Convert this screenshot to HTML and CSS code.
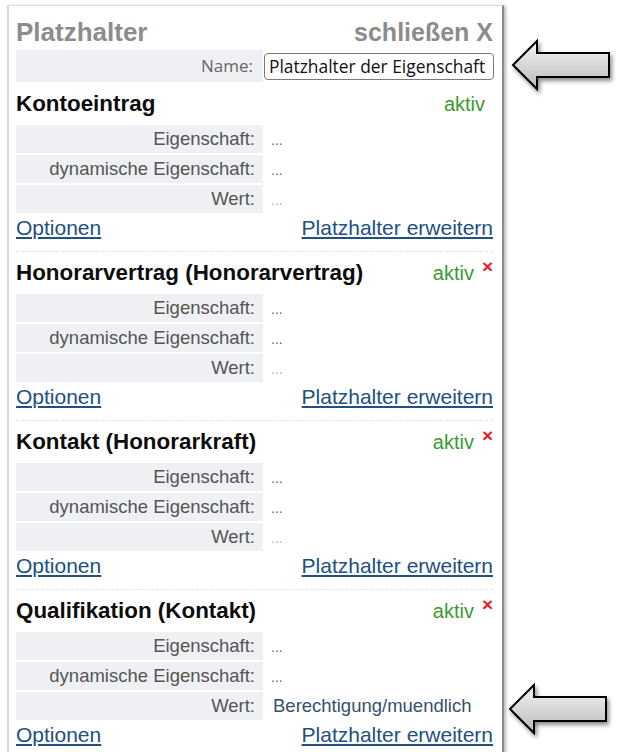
FILE: index.html
```html
<!DOCTYPE html>
<html lang="de">
<head>
<meta charset="utf-8">
<title>Platzhalter</title>
<link rel="stylesheet" href="styles.css">
</head>
<body>
<div class="panel">
  <div class="title-row">
    <span class="title">Platzhalter</span>
    <span class="close">schließen X</span>
  </div>
  <div class="name-row">
    <div class="name-label">Name:</div>
    <div class="name-field"><input class="name-input" type="text" value="Platzhalter der Eigenschaft"></div>
  </div>

  <section class="entry">
    <div class="entry-head">
      <span class="entry-title">Kontoeintrag</span>
      <span class="status status-solo">aktiv</span>
    </div>
    <div class="props">
      <div class="prop-label">Eigenschaft:</div><div class="prop-value">...</div>
      <div class="prop-label">dynamische Eigenschaft:</div><div class="prop-value">...</div>
      <div class="prop-label">Wert:</div><div class="prop-value prop-empty">...</div>
    </div>
    <div class="entry-links"><a href="#">Optionen</a><a href="#">Platzhalter erweitern</a></div>
  </section>

  <section class="entry">
    <div class="entry-head">
      <span class="entry-title">Honorarvertrag (Honorarvertrag)</span>
      <span class="status">aktiv<span class="remove">×</span></span>
    </div>
    <div class="props">
      <div class="prop-label">Eigenschaft:</div><div class="prop-value">...</div>
      <div class="prop-label">dynamische Eigenschaft:</div><div class="prop-value">...</div>
      <div class="prop-label">Wert:</div><div class="prop-value prop-empty">...</div>
    </div>
    <div class="entry-links"><a href="#">Optionen</a><a href="#">Platzhalter erweitern</a></div>
  </section>

  <section class="entry">
    <div class="entry-head">
      <span class="entry-title">Kontakt (Honorarkraft)</span>
      <span class="status">aktiv<span class="remove">×</span></span>
    </div>
    <div class="props">
      <div class="prop-label">Eigenschaft:</div><div class="prop-value">...</div>
      <div class="prop-label">dynamische Eigenschaft:</div><div class="prop-value">...</div>
      <div class="prop-label">Wert:</div><div class="prop-value prop-empty">...</div>
    </div>
    <div class="entry-links"><a href="#">Optionen</a><a href="#">Platzhalter erweitern</a></div>
  </section>

  <section class="entry">
    <div class="entry-head">
      <span class="entry-title">Qualifikation (Kontakt)</span>
      <span class="status">aktiv<span class="remove">×</span></span>
    </div>
    <div class="props">
      <div class="prop-label">Eigenschaft:</div><div class="prop-value">...</div>
      <div class="prop-label">dynamische Eigenschaft:</div><div class="prop-value">...</div>
      <div class="prop-label">Wert:</div><div class="prop-value prop-filled">Berechtigung/muendlich</div>
    </div>
    <div class="entry-links"><a href="#">Optionen</a><a href="#">Platzhalter erweitern</a></div>
  </section>
</div>

<svg class="arrow arrow-top" width="112" height="64" viewBox="0 0 112 64" aria-hidden="true">
  <defs>
    <linearGradient id="ag1" x1="0" y1="0" x2="0" y2="1">
      <stop offset="0" stop-color="#f6f6f6"/>
      <stop offset="1" stop-color="#b9b9b9"/>
    </linearGradient>
  </defs>
  <path d="M8 31 L32 7 L32 19 L104 19 L104 43 L32 43 L32 55 Z" fill="url(#ag1)" stroke="#000" stroke-width="2" stroke-linejoin="miter"/>
</svg>
<svg class="arrow arrow-bottom" width="112" height="64" viewBox="0 0 112 64" aria-hidden="true">
  <defs>
    <linearGradient id="ag2" x1="0" y1="0" x2="0" y2="1">
      <stop offset="0" stop-color="#f6f6f6"/>
      <stop offset="1" stop-color="#b9b9b9"/>
    </linearGradient>
  </defs>
  <path d="M8 31 L32 7 L32 19 L104 19 L104 43 L32 43 L32 55 Z" fill="url(#ag2)" stroke="#000" stroke-width="2" stroke-linejoin="miter"/>
</svg>
</body>
</html>
```
FILE: styles.css
```css
html, body {
  margin: 0;
  padding: 0;
  overflow: hidden;
  background: #ffffff;
}

body {
  position: relative;
  width: 620px;
  height: 752px;
  font-family: "Liberation Sans", Arial, sans-serif;
}

.panel {
  box-sizing: border-box;
  width: 497px;
  margin: 5px 0 0 7px;
  padding: 11px 9px 0 7px;
  background: #ffffff;
  border-top: 1px solid #dcdcdc;
  border-left: 2px solid #d9d9d9;
  border-right: 2px solid #8a8a8a;
  box-shadow: 2px 1px 3px rgba(0, 0, 0, 0.28);
}

.title-row {
  display: flex;
  justify-content: space-between;
  align-items: baseline;
  height: 30px;
  line-height: 30px;
  margin-bottom: 3px;
  color: #8c8c8c;
  font-weight: bold;
}

.title {
  font-size: 26px;
}

.close {
  font-size: 25px;
}

.name-row {
  display: grid;
  grid-template-columns: 247px 1fr;
  height: 32px;
  margin-bottom: 1px;
}

.name-label {
  background: #eef0f3;
  text-align: right;
  padding-right: 10px;
  font-family: "Open Sans", "DejaVu Sans", sans-serif;
  font-size: 17px;
  line-height: 32px;
  color: #666666;
}

.name-field {
  display: flex;
  align-items: center;
  padding-left: 1px;
}

.name-input {
  box-sizing: border-box;
  width: 230px;
  height: 27px;
  margin: 0;
  padding: 0 0 0 4px;
  border: 1px solid #7a7a7a;
  border-radius: 4px;
  font-family: "Open Sans", "DejaVu Sans", sans-serif;
  font-size: 17.4px;
  color: #111111;
  background: #ffffff;
  outline: none;
}

.entry {
  padding: 8px 0 10px;
  border-bottom: 1px dashed #dfe4ea;
}

.entry-head {
  display: flex;
  justify-content: space-between;
  align-items: baseline;
  height: 26px;
  line-height: 26px;
  margin-bottom: 8px;
}

.entry-title {
  font-size: 22.4px;
  font-weight: bold;
  color: #0d0d0d;
}

.status {
  font-size: 20px;
  color: #3a9a32;
}

.status-solo {
  padding-right: 8px;
}

.remove {
  display: inline-block;
  vertical-align: top;
  margin-left: 8px;
  line-height: 13px;
  font-size: 19px;
  font-weight: bold;
  color: #e41f1f;
}

.props {
  display: grid;
  grid-template-columns: 247px 1fr;
  grid-auto-rows: 28px;
  row-gap: 2px;
}

.prop-label {
  background: #eef0f3;
  text-align: right;
  padding-right: 8px;
  font-size: 18.5px;
  line-height: 28px;
  color: #555555;
  white-space: nowrap;
}

.prop-value {
  padding-left: 8px;
  font-size: 14px;
  line-height: 30px;
  color: #666666;
}

.prop-empty {
  color: #b0b0b0;
}

.prop-filled {
  padding-left: 10px;
  font-size: 18.5px;
  line-height: 28px;
  color: #36506e;
  white-space: nowrap;
}

.entry-links {
  display: flex;
  justify-content: space-between;
  height: 28px;
  line-height: 30px;
  font-size: 21px;
}

.entry-links a {
  color: #22507f;
  text-decoration: underline;
}

.arrow {
  position: absolute;
  filter: drop-shadow(2px 3px 2px rgba(0, 0, 0, 0.45));
}

.arrow-top {
  left: 505px;
  top: 34px;
}

.arrow-bottom {
  left: 502px;
  top: 678px;
}
```
